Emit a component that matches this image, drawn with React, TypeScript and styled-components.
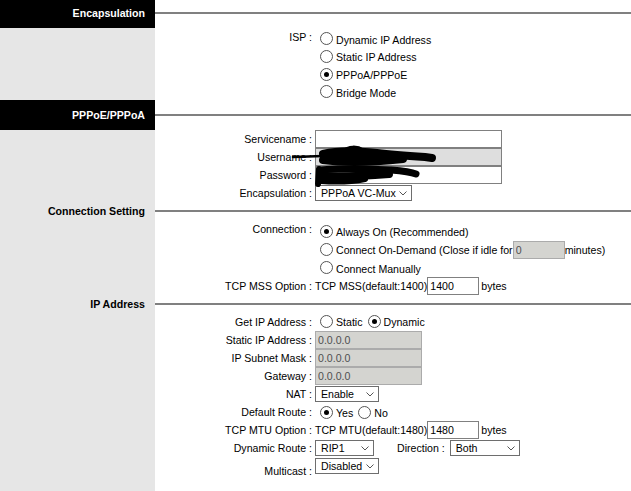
import React from "react";
import styled, { createGlobalStyle } from "styled-components";

const GlobalStyle = createGlobalStyle`
	html, body {
		margin: 0;
		padding: 0;
		background: #fff;
	}
	body {
		font-family: "Liberation Sans", Arial, sans-serif;
		font-size: 10.6px;
		color: #000;
	}
`;

const Page = styled.div`
	display: flex;
	flex-direction: column;
	min-height: calc(100vh + 2px);
	margin-top: -2px;
	overflow: hidden;
`;

// section header: title cell on the left, grey rule on the right
const Head = styled.div<{ $h: number }>`
	display: grid;
	grid-template-columns: 155px 1fr;
	height: ${(p) => p.$h}px;
`;
const Title = styled.div<{ $dark?: boolean }>`
	background: ${(p) => (p.$dark ? "#000" : "#e6e6e6")};
	color: ${(p) => (p.$dark ? "#fff" : "#000")};
	font-weight: bold;
	display: flex;
	align-items: center;
	justify-content: flex-end;
	padding-right: 10px;
	white-space: nowrap;
`;
const Rule = styled.div`
	display: flex;
	align-items: center;
	&::after {
		content: "";
		flex: 1;
		height: 2px;
		background: #808080;
	}
`;

const Body = styled.div<{ $grow?: boolean }>`
	display: grid;
	grid-template-columns: 155px 1fr;
	position: relative;
	flex: ${(p) => (p.$grow ? 1 : "none")};
`;
const Side = styled.div`
	background: #e6e6e6;
`;
const Fields = styled.div`
	display: flex;
	flex-direction: column;
`;

const Row = styled.div<{ $h: number; $align?: string }>`
	display: grid;
	grid-template-columns: 157px 1fr;
	column-gap: 3px;
	height: ${(p) => p.$h}px;
	align-items: ${(p) => p.$align ?? "center"};
`;
const Label = styled.div<{ $self?: string; $pt?: number }>`
	text-align: right;
	white-space: nowrap;
	line-height: 12px;
	align-self: ${(p) => p.$self ?? "auto"};
	padding-top: ${(p) => p.$pt ?? 0}px;
`;
const Value = styled.div<{ $self?: string; $mt?: number }>`
	display: flex;
	align-items: center;
	white-space: nowrap;
	align-self: ${(p) => p.$self ?? "auto"};
	margin-top: ${(p) => p.$mt ?? 0}px;
`;
const Options = styled.div<{ $pt?: number }>`
	display: flex;
	flex-direction: column;
	padding-top: ${(p) => p.$pt ?? 0}px;
`;
const Choice = styled.label<{ $h?: number }>`
	display: flex;
	align-items: center;
	height: ${(p) => (p.$h ? `${p.$h}px` : "auto")};
	white-space: nowrap;
	line-height: 12px;
`;

const Radio = styled.input.attrs({ type: "radio" })`
	appearance: none;
	box-sizing: border-box;
	width: 13px;
	height: 13px;
	margin: 0 3px 0 5px;
	border: 1px solid #555;
	border-radius: 50%;
	background: #fff;
	flex: none;
	display: grid;
	place-content: center;
	position: relative;
	top: -1px;
	&:checked::before {
		content: "";
		width: 5px;
		height: 5px;
		border-radius: 50%;
		background: #000;
	}
`;

const tones = {
	white: { bg: "#fff", border: "#808080", color: "#000" },
	user: { bg: "#dedede", border: "#808080", color: "#000" },
	off: { bg: "#d4d4d0", border: "#ababab", color: "#505050" },
};

const Field = styled.input<{ $w: number; $tone?: keyof typeof tones }>`
	box-sizing: border-box;
	width: ${(p) => p.$w}px;
	height: 18px;
	margin: 0;
	padding: 0 2px;
	font: inherit;
	border: 1px solid ${(p) => tones[p.$tone ?? "white"].border};
	background: ${(p) => tones[p.$tone ?? "white"].bg};
	color: ${(p) => tones[p.$tone ?? "white"].color};
	outline: none;
`;

const SelectBox = styled.span<{ $w: number }>`
	position: relative;
	display: inline-flex;
	width: ${(p) => p.$w}px;
	height: 16px;
	flex: none;
`;
const Sel = styled.select`
	appearance: none;
	box-sizing: border-box;
	width: 100%;
	height: 100%;
	margin: 0;
	padding: 0 14px 0 5px;
	border: 1px solid #6e6e6e;
	border-radius: 0;
	background: #fff;
	font: inherit;
	color: #000;
	line-height: 14px;
`;
const Caret = styled.svg`
	position: absolute;
	right: 5px;
	top: 6px;
	width: 8px;
	height: 5px;
	pointer-events: none;
`;

const Unit = styled.span`
	margin-left: 2px;
`;
const DirLabel = styled.span`
	margin: 0 5px 0 23px;
`;

// the black marker blot over the login fields
const Scribble = styled.svg`
	position: absolute;
	left: 285px;
	top: 10px;
	width: 160px;
	height: 50px;
	pointer-events: none;
`;

function Select({ w, value }: { w: number; value: string }) {
	return (
		<SelectBox $w={w}>
			<Sel defaultValue={value}>
				<option>{value}</option>
			</Sel>
			<Caret viewBox="0 0 8 5">
				<polyline
					points="0.5,0.5 4,4 7.5,0.5"
					fill="none"
					stroke="#555"
					strokeWidth={1}
				/>
			</Caret>
		</SelectBox>
	);
}

function Section({
	title,
	dark,
	h,
	grow,
	children,
}: {
	title: string;
	dark?: boolean;
	h: number;
	grow?: boolean;
	children: React.ReactNode;
}) {
	return (
		<>
			<Head $h={h}>
				<Title $dark={dark}>{title}</Title>
				<Rule />
			</Head>
			<Body $grow={grow}>{children}</Body>
		</>
	);
}

export default function App() {
	return (
		<>
			<GlobalStyle />
			<Page>
				<Section title="Encapsulation" dark h={30}>
					<Side />
					<Fields>
						<Row $h={72} $align="start">
							<Label $pt={3}>ISP :</Label>
							<Options $pt={3}>
								<Choice $h={17.67}>
									<Radio name="isp" />
									Dynamic IP Address
								</Choice>
								<Choice $h={17.67}>
									<Radio name="isp" />
									Static IP Address
								</Choice>
								<Choice $h={17.67}>
									<Radio name="isp" defaultChecked />
									PPPoA/PPPoE
								</Choice>
								<Choice $h={17.67}>
									<Radio name="isp" />
									Bridge Mode
								</Choice>
							</Options>
						</Row>
					</Fields>
				</Section>

				<Section title="PPPoE/PPPoA" dark h={30}>
					<Side />
					<Fields>
						<Row $h={18}>
							<Label>Servicename :</Label>
							<Value>
								<Field $w={187} defaultValue="" />
							</Value>
						</Row>
						<Row $h={18}>
							<Label>Username :</Label>
							<Value>
								<Field $w={187} $tone="user" defaultValue="" />
							</Value>
						</Row>
						<Row $h={18}>
							<Label>Password :</Label>
							<Value>
								<Field $w={187} type="password" defaultValue="" />
							</Value>
						</Row>
						<Row $h={18}>
							<Label>Encapsulation :</Label>
							<Value>
								<Select w={97} value="PPPoA VC-Mux" />
							</Value>
						</Row>
					</Fields>
					<Scribble viewBox="0 0 160 50">
						<g fill="none" stroke="#000" strokeLinecap="round" strokeLinejoin="round">
							<path d="M8,17 L38,16" strokeWidth={2.5} />
							<path d="M38,14 C55,10 72,11 92,13 C108,15 124,16 140,17 L147,18" strokeWidth={8} />
							<path d="M38,20 C60,23 90,22 118,19" strokeWidth={8} />
							<path d="M40,17 L110,17" strokeWidth={8} />
							<path d="M58,12 C64,7 72,7 78,11" strokeWidth={5} />
							<path d="M37,30 C55,28 80,29 106,30 C118,31 126,32 131,34" strokeWidth={7} />
							<path d="M36,36 C55,37 80,36 104,34" strokeWidth={8} />
							<path d="M36,41 C50,42 65,42 80,39" strokeWidth={6} />
							<path d="M34,29 L33,44" strokeWidth={6} />
						</g>
					</Scribble>
				</Section>

				<Section title="Connection Setting" h={18}>
					<Side />
					<Fields>
						<Row $h={57} $align="start">
							<Label $pt={3}>Connection :</Label>
							<Options $pt={3}>
								<Choice $h={18}>
									<Radio name="conn" defaultChecked />
									Always On (Recommended)
								</Choice>
								<Choice $h={18}>
									<Radio name="conn" />
									Connect On-Demand (Close if idle for
									<Field $w={52} $tone="off" defaultValue="0" />
									minutes)
								</Choice>
								<Choice $h={19}>
									<Radio name="conn" />
									Connect Manually
								</Choice>
							</Options>
						</Row>
						<Row $h={18}>
							<Label>TCP MSS Option :</Label>
							<Value>
								TCP MSS(default:1400)
								<Field $w={52} defaultValue="1400" />
								<Unit>bytes</Unit>
							</Value>
						</Row>
					</Fields>
				</Section>

				<Section title="IP Address" h={18} grow>
					<Side />
					<Fields>
						<Row $h={18}>
							<Label>Get IP Address :</Label>
							<Options>
								<Choice>
									<Radio name="getip" />
									Static
									<Radio name="getip" defaultChecked />
									Dynamic
								</Choice>
							</Options>
						</Row>
						<Row $h={18}>
							<Label>Static IP Address :</Label>
							<Value>
								<Field $w={107} $tone="off" defaultValue="0.0.0.0" />
							</Value>
						</Row>
						<Row $h={18}>
							<Label>IP Subnet Mask :</Label>
							<Value>
								<Field $w={107} $tone="off" defaultValue="0.0.0.0" />
							</Value>
						</Row>
						<Row $h={18}>
							<Label>Gateway :</Label>
							<Value>
								<Field $w={107} $tone="off" defaultValue="0.0.0.0" />
							</Value>
						</Row>
						<Row $h={18}>
							<Label>NAT :</Label>
							<Value>
								<Select w={64} value="Enable" />
							</Value>
						</Row>
						<Row $h={18}>
							<Label>Default Route :</Label>
							<Options $pt={2}>
								<Choice>
									<Radio name="route" defaultChecked />
									Yes
									<Radio name="route" />
									No
								</Choice>
							</Options>
						</Row>
						<Row $h={18}>
							<Label>TCP MTU Option :</Label>
							<Value>
								TCP MTU(default:1480)
								<Field $w={52} defaultValue="1480" />
								<Unit>bytes</Unit>
							</Value>
						</Row>
						<Row $h={18}>
							<Label>Dynamic Route :</Label>
							<Value>
								<Select w={59} value="RIP1" />
								<DirLabel>Direction :</DirLabel>
								<Select w={70} value="Both" />
							</Value>
						</Row>
						<Row $h={20} $align="start">
							<Label $self="end">Multicast :</Label>
							<Value $mt={1}>
								<Select w={64} value="Disabled" />
							</Value>
						</Row>
					</Fields>
				</Section>
			</Page>
		</>
	);
}
